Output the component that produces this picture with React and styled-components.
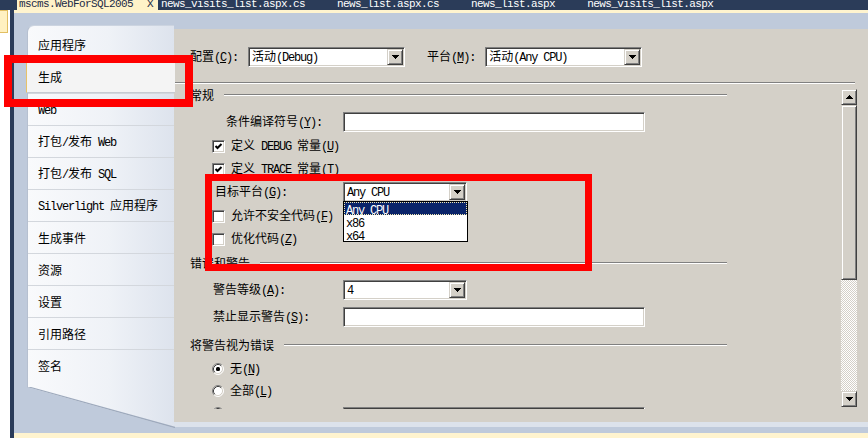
import React from "react";
import styled, { createGlobalStyle, css } from "styled-components";

const NAVY = "#2B3C59";
const FACE = "#D4D0C8";
const WELL = "#BFCADB";

const GlobalStyle = createGlobalStyle`
  html, body { margin: 0; padding: 0; }
  body {
    background: ${WELL};
    font-family: "Noto Sans CJK SC", "Noto Sans", sans-serif;
    font-size: 12px;
    color: #000;
  }
  *, *::before, *::after { box-sizing: border-box; }
`;

/* ---------- text helpers ---------- */
const Asc = styled.span`
  font-family: "Liberation Mono", "DejaVu Sans Mono", monospace;
  font-size: 12px;
  letter-spacing: -1.2px;
`;

const Mixed = ({ s }) => (
  <span>
    {s
      .split(/([\x20-\x7E]+)/)
      .filter(Boolean)
      .map((p, i) =>
        /^[\x20-\x7E]+$/.test(p) ? <Asc key={i}>{p}</Asc> : <span key={i}>{p}</span>
      )}
  </span>
);

const Caption = ({ text, k, colon }) => (
  <span>
    <Mixed s={text} />
    <Asc>
      (<u>{k}</u>){colon ? ":" : ""}
    </Asc>
  </span>
);

/* ---------- frame ---------- */
const Frame = styled.div`
  position: relative;
  width: 868px;
  height: 438px;
  overflow: hidden;
  display: flex;
  flex-direction: column;
  background: ${WELL};
`;

const TabStrip = styled.div`
  height: 10px;
  flex-shrink: 0;
  background: ${NAVY};
  display: flex;
  align-items: flex-end;
  overflow: hidden;
  padding-left: 17px;
`;

const DocTab = styled.div`
  flex-shrink: 0;
  height: 13px;
  line-height: 12px;
  display: flex;
  align-items: flex-end;
  gap: 14px;
  white-space: nowrap;
  padding: ${(p) => (p.$active ? "0 5px 0 2px" : "0 29px 0 3px")};
  background: ${(p) => (p.$active ? "#FFF3C8" : "transparent")};
  color: ${(p) => (p.$active ? "#1B2A45" : "#FFFFFF")};
  font-family: "Liberation Mono", "DejaVu Sans Mono", monospace;
  font-size: 11px;
  letter-spacing: -0.6px;
`;

const Workspace = styled.div`
  flex: 1;
  min-height: 0;
  display: grid;
  grid-template-columns: 10px 4px 1fr;
`;

const ToolEdge = styled.div`
  background: #ffffff;
`;

const ToolPin = styled.div`
  width: 8px;
  height: 23px;
  background: #fff1c1;
  border: 1px solid #e2bf62;
  border-left: none;
`;

const NavyRail = styled.div`
  background: ${NAVY};
`;

const DocWell = styled.div`
  display: flex;
  flex-direction: column;
  min-width: 0;
`;

const ActiveEdge = styled.div`
  flex-shrink: 0;
  height: ${(p) => p.$h}px;
  background: #fff4cf;
`;

const DesignerArea = styled.div`
  flex: 1;
  min-height: 0;
  display: flex;
  align-items: flex-start;
  padding-left: 13px;
  background: ${WELL};
`;

/* ---------- left page tabs ---------- */
const PageTabs = styled.nav`
  position: relative;
  z-index: 1;
  flex-shrink: 0;
  width: 147px;
  height: 403px;
  margin-top: 12px;
  padding-top: 3px;
  background: linear-gradient(90deg, #f9fafc 0%, #eff2f7 55%, #dde3ed 100%);
  border-top: 1px solid #ccd4e0;
  border-left: 1px solid #b6c0d0;
  border-top-left-radius: 7px;
  clip-path: polygon(
    -3px -3px,
    calc(100% + 3px) -3px,
    calc(100% + 3px) 100%,
    100% 100%,
    0 calc(100% - 41px),
    -3px calc(100% - 41px)
  );
`;

const TabItem = styled.div`
  height: 32px;
  display: flex;
  align-items: center;
  padding-left: 10px;
  white-space: nowrap;
  line-height: 14px;
  & + & {
    border-top: 1px solid rgba(140, 155, 180, 0.22);
  }
  &:last-child {
    border-bottom: 1px solid rgba(140, 155, 180, 0.22);
  }
  ${(p) =>
    p.$selected &&
    css`
      margin: 0 -1px 0 -2px;
      padding-left: 11px;
      background: #f4f4f4;
      border-left: 1px solid #e7c26a;
      & + &,
      & {
        border-top: 1px solid #d3d7dd;
      }
      border-bottom: 1px solid #c6cbd2;
    `}
`;

const Bevel = styled.svg`
  position: absolute;
  left: -1px;
  bottom: 0;
  width: 148px;
  height: 41px;
`;

/* ---------- right page body ---------- */
const PageBody = styled.section`
  flex: 1;
  min-width: 0;
  height: 398px;
  margin-top: 16px;
  padding: 18px 0 13px 0;
  background: ${FACE};
  border-bottom: 5px solid #dce2eb;
  display: flex;
  flex-direction: column;
`;

const ConfigBar = styled.div`
  height: 20px;
  flex-shrink: 0;
  display: flex;
  align-items: center;
  padding-left: 16px;
  line-height: 14px;
  white-space: nowrap;
`;

const ConfigLabel = styled.span`
  margin-left: ${(p) => p.$ml || 0}px;
  margin-right: 10px;
`;

const Etched = styled.div`
  flex-shrink: 0;
  height: 2px;
  margin-top: 15px;
  margin-right: 13px;
  border-top: 1px solid #808080;
  border-bottom: 1px solid #ffffff;
`;

const ScrollRegion = styled.div`
  height: 325px;
  flex-shrink: 0;
  display: flex;
`;

const Form = styled.div`
  position: relative;
  flex: 1;
  min-width: 0;
  overflow: hidden;
  padding-left: 16px;
  display: flex;
  flex-direction: column;
`;

const Row = styled.div`
  flex-shrink: 0;
  display: flex;
  align-items: center;
  height: ${(p) => p.$h || 14}px;
  margin-top: ${(p) => p.$mt || 0}px;
  padding-left: ${(p) => p.$indent || 0}px;
  line-height: 14px;
  white-space: nowrap;
`;

const GroupHead = styled(Row)`
  margin-right: 114px;
  &::after {
    content: "";
    flex: 1;
    height: 2px;
    margin-left: 10px;
    border-top: 1px solid #808080;
    border-bottom: 1px solid #ffffff;
  }
`;

const Field = styled(Row)`
  display: grid;
  grid-template-columns: 153px auto;
  align-items: ${(p) => (p.$start ? "start" : "center")};
  height: 20px;
`;

const FieldLabel = styled.div`
  display: flex;
  align-items: ${(p) => (p.$start ? "flex-start" : "center")};
  padding-left: ${(p) => p.$indent || 0}px;
`;

const OptText = styled.span`
  margin-left: 6px;
  margin-top: ${(p) => p.$mt || 0}px;
`;

const sunken = css`
  border: 1px solid;
  border-color: #808080 #ffffff #ffffff #808080;
  box-shadow: inset 1px 1px 0 #404040, inset -1px -1px 0 ${FACE};
  background: #ffffff;
`;

const raised = css`
  background: ${FACE};
  border: 1px solid;
  border-color: ${FACE} #404040 #404040 ${FACE};
  box-shadow: inset 1px 1px 0 #ffffff, inset -1px -1px 0 #808080;
`;

const TextBox = styled.div`
  ${sunken};
  width: 302px;
  height: 20px;
`;

const ComboShell = styled.div`
  ${sunken};
  position: relative;
  width: ${(p) => p.$w}px;
  height: 20px;
  padding: 1px;
  display: flex;
  align-items: center;
`;

const ComboValue = styled.div`
  flex: 1;
  min-width: 0;
  padding-left: 2px;
  line-height: 14px;
  white-space: nowrap;
  overflow: hidden;
`;

const DropBtn = styled.div`
  ${raised};
  width: 16px;
  height: 16px;
  flex-shrink: 0;
  display: flex;
  align-items: center;
  justify-content: center;
`;

const DropList = styled.div`
  position: absolute;
  top: 100%;
  left: -1px;
  z-index: 2;
  width: 125px;
  background: #ffffff;
  border: 1px solid #000000;
`;

const DropItem = styled.div`
  height: 13px;
  line-height: 13px;
  padding-left: 2px;
  ${(p) =>
    p.$sel &&
    css`
      background: #0a246a;
      color: #ffffff;
      outline: 1px dotted #f3e9b0;
      outline-offset: -1px;
    `}
`;

const BoxWrap = styled.span`
  ${sunken};
  width: 13px;
  height: 13px;
  flex-shrink: 0;
  display: inline-flex;
  align-items: center;
  justify-content: center;
`;

const Arrow = ({ up }) => (
  <svg width="7" height="4" viewBox="0 0 7 4" shapeRendering="crispEdges">
    <polygon points={up ? "0,4 7,4 3.5,0" : "0,0 7,0 3.5,4"} fill="#000" />
  </svg>
);

const Combo = ({ w, value, items }) => (
  <ComboShell $w={w}>
    <ComboValue>
      <Mixed s={value} />
    </ComboValue>
    <DropBtn>
      <Arrow />
    </DropBtn>
    {items && (
      <DropList>
        {items.map((it, i) => (
          <DropItem key={it} $sel={i === 0}>
            <Asc>{it}</Asc>
          </DropItem>
        ))}
      </DropList>
    )}
  </ComboShell>
);

const CheckBox = ({ checked }) => (
  <BoxWrap>
    {checked && (
      <svg width="9" height="9" viewBox="0 0 9 9">
        <polyline points="1.5,4 3.5,6 7.5,2" fill="none" stroke="#000" strokeWidth="2" />
      </svg>
    )}
  </BoxWrap>
);

const RadioDot = styled.svg`
  flex-shrink: 0;
`;

const Radio = ({ checked }) => (
  <RadioDot width="12" height="12" viewBox="0 0 12 12">
    <circle cx="6" cy="6" r="5" fill="#fff" />
    <path d="M2.11 9.89 A5.5 5.5 0 0 1 9.89 2.11" fill="none" stroke="#808080" strokeWidth="1" />
    <path d="M9.89 2.11 A5.5 5.5 0 0 1 2.11 9.89" fill="none" stroke="#ffffff" strokeWidth="1" />
    <path d="M2.82 9.18 A4.5 4.5 0 0 1 9.18 2.82" fill="none" stroke="#404040" strokeWidth="1" />
    <path d="M9.18 2.82 A4.5 4.5 0 0 1 2.82 9.18" fill="none" stroke={FACE} strokeWidth="1" />
    {checked && <rect x="4" y="4" width="4" height="4" rx="1.5" fill="#000" />}
  </RadioDot>
);

/* ---------- scrollbar ---------- */
const ScrollCol = styled.div`
  width: 16px;
  flex-shrink: 0;
  margin-right: 11px;
  padding: 5px 0 2px;
  display: flex;
  flex-direction: column;
`;

const ScrollBtn = styled.div`
  ${raised};
  height: 16px;
  flex-shrink: 0;
  display: flex;
  align-items: center;
  justify-content: center;
`;

const Thumb = styled.div`
  ${raised};
  height: 175px;
  flex-shrink: 0;
`;

const Track = styled.div`
  flex: 1;
  background-color: #ffffff;
  background-image: repeating-conic-gradient(${FACE} 0 25%, #ffffff 0 50%);
  background-size: 2px 2px;
`;

/* ---------- annotation ---------- */
const Highlight = styled.div`
  position: absolute;
  pointer-events: none;
  z-index: 5;
  left: ${(p) => p.$x}px;
  top: ${(p) => p.$y}px;
  width: ${(p) => p.$w}px;
  height: ${(p) => p.$h}px;
  border: ${(p) => p.$t}px solid #ff0000;
`;

const tabs = [
  "应用程序",
  "生成",
  "Web",
  "打包/发布 Web",
  "打包/发布 SQL",
  "Silverlight 应用程序",
  "生成事件",
  "资源",
  "设置",
  "引用路径",
  "签名",
];

export default function App() {
  return (
    <>
      <GlobalStyle />
      <Frame>
        <TabStrip>
          <DocTab $active>
            <span>mscms.WebForSQL2005</span>
            <span>X</span>
          </DocTab>
          <DocTab>news_visits_list.aspx.cs</DocTab>
          <DocTab>news_list.aspx.cs</DocTab>
          <DocTab>news_list.aspx</DocTab>
          <DocTab>news_visits_list.aspx</DocTab>
        </TabStrip>
        <Workspace>
          <ToolEdge>
            <ToolPin />
          </ToolEdge>
          <NavyRail />
          <DocWell>
            <ActiveEdge $h={3} />
            <DesignerArea>
              <PageTabs>
                {tabs.map((t) => (
                  <TabItem key={t} $selected={t === "生成"}>
                    <Mixed s={t} />
                  </TabItem>
                ))}
                <Bevel viewBox="0 0 148 41" preserveAspectRatio="none">
                  <line x1="0" y1="0" x2="148" y2="41" stroke="#9eaabd" strokeWidth="2.2" />
                </Bevel>
              </PageTabs>
              <PageBody>
                <ConfigBar>
                  <ConfigLabel>
                    <Caption text="配置" k="C" colon />
                  </ConfigLabel>
                  <Combo w={157} value="活动(Debug)" />
                  <ConfigLabel $ml={22}>
                    <Caption text="平台" k="M" colon />
                  </ConfigLabel>
                  <Combo w={157} value="活动(Any CPU)" />
                </ConfigBar>
                <Etched />
                <ScrollRegion>
                  <Form>
                    <GroupHead $mt={4}>常规</GroupHead>
                    <Field $mt={10}>
                      <FieldLabel $indent={36}>
                        <Caption text="条件编译符号" k="Y" colon />
                      </FieldLabel>
                      <TextBox />
                    </Field>
                    <Row $mt={7} $indent={22}>
                      <CheckBox checked />
                      <OptText>
                        <Caption text="定义 DEBUG 常量" k="U" />
                      </OptText>
                    </Row>
                    <Row $mt={9} $indent={22}>
                      <CheckBox checked />
                      <OptText>
                        <Caption text="定义 TRACE 常量" k="T" />
                      </OptText>
                    </Row>
                    <Field $mt={6}>
                      <FieldLabel $indent={25}>
                        <Caption text="目标平台" k="G" colon />
                      </FieldLabel>
                      <Combo w={124} value="Any CPU" items={["Any CPU", "x86", "x64"]} />
                    </Field>
                    <Row $mt={7} $indent={22}>
                      <CheckBox />
                      <OptText>
                        <Caption text="允许不安全代码" k="F" />
                      </OptText>
                    </Row>
                    <Row $mt={9} $indent={22}>
                      <CheckBox />
                      <OptText>
                        <Caption text="优化代码" k="Z" />
                      </OptText>
                    </Row>
                    <GroupHead $mt={10}>错误和警告</GroupHead>
                    <Field $mt={10}>
                      <FieldLabel $indent={23}>
                        <Caption text="警告等级" k="A" colon />
                      </FieldLabel>
                      <Combo w={124} value="4" />
                    </Field>
                    <Field $mt={7}>
                      <FieldLabel $indent={23}>
                        <Caption text="禁止显示警告" k="S" colon />
                      </FieldLabel>
                      <TextBox />
                    </Field>
                    <GroupHead $mt={11}>将警告视为错误</GroupHead>
                    <Row $mt={10} $indent={22}>
                      <Radio checked />
                      <OptText>
                        <Caption text="无" k="N" />
                      </OptText>
                    </Row>
                    <Row $mt={8} $indent={22}>
                      <Radio />
                      <OptText>
                        <Caption text="全部" k="L" />
                      </OptText>
                    </Row>
                    <Field $mt={9} $start>
                      <FieldLabel $indent={22} $start>
                        <Radio />
                        <OptText $mt={4}>
                          <Caption text="特定警告" k="P" colon />
                        </OptText>
                      </FieldLabel>
                      <TextBox />
                    </Field>
                  </Form>
                  <ScrollCol>
                    <ScrollBtn>
                      <Arrow up />
                    </ScrollBtn>
                    <Thumb />
                    <Track />
                    <ScrollBtn>
                      <Arrow />
                    </ScrollBtn>
                  </ScrollCol>
                </ScrollRegion>
              </PageBody>
            </DesignerArea>
            <ActiveEdge $h={5} />
          </DocWell>
        </Workspace>
        <Highlight $x={4} $y={55} $w={189} $h={52} $t={8} />
        <Highlight $x={205} $y={174} $w={387} $h={97} $t={7} />
      </Frame>
    </>
  );
}
